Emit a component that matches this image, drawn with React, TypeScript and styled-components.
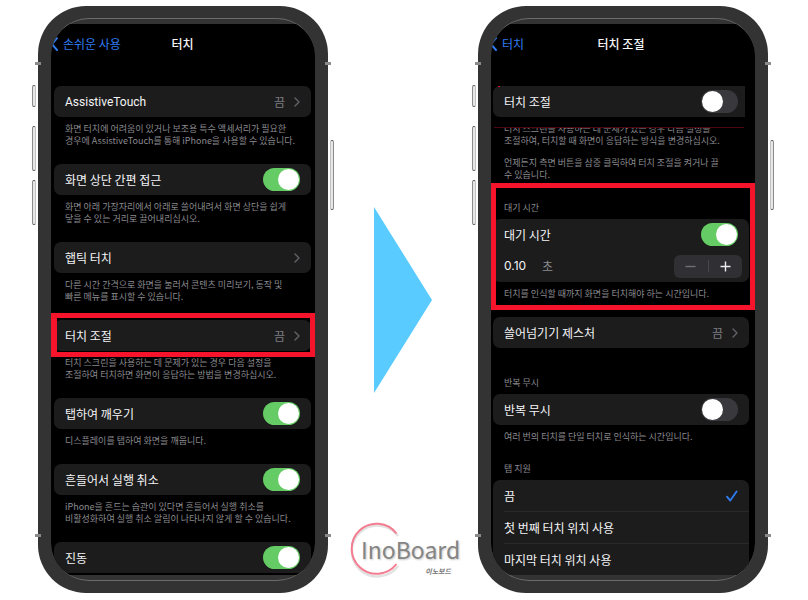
import React, { useState } from 'react';
import styled, { createGlobalStyle, css } from 'styled-components';

const GlobalStyle = createGlobalStyle`
  * { box-sizing: border-box; }
  body {
    margin: 0;
    background: #ffffff;
    font-family: "Noto Sans CJK KR", "Noto Sans", sans-serif;
    -webkit-font-smoothing: antialiased;
  }
  button, input { font: inherit; color: inherit; }
`;

const Page = styled.main`
  display: grid;
  grid-template-columns: 290fr 150fr 290fr;
  min-height: 100vh;
  padding: 6px 40px 7px 38px;
`;

/* ---------- phone body ---------- */

const Frame = styled.section`
  position: relative;
  display: flex;
  padding: 12px 13px;
  border-radius: 48px;
  background: #333333;
`;

const SideKey = styled.span<{ $side: 'left' | 'right'; $top: number; $length: number }>`
  position: absolute;
  ${(p) => p.$side}: -6px;
  top: ${(p) => p.$top}px;
  width: 4px;
  height: ${(p) => p.$length}px;
  border: 1px solid #8c8c8c;
  border-${(p) => (p.$side === 'left' ? 'right' : 'left')}-color: #c4c4c4;
  border-top-color: #555555;
  border-bottom-color: #555555;
  border-radius: 2px;
  background: #e6e6e6;
`;

const Antenna = styled.span<{ $side: 'left' | 'right'; $edge: 'top' | 'bottom' }>`
  position: absolute;
  ${(p) => p.$side}: -3px;
  ${(p) => p.$edge}: 56px;
  width: 6px;
  height: 3px;
  background: #8a8a8a;
`;

const Glass = styled.div`
  display: flex;
  flex: 1;
  min-width: 0;
  padding: 5px 0;
  border: solid #6c6c6c;
  border-width: 1px 0;
  border-radius: 38px;
  overflow: hidden;
`;

const Screen = styled.div<{ $end: number; $start: number }>`
  flex: 1;
  min-width: 0;
  padding: 0 ${(p) => p.$end}px 0 ${(p) => p.$start}px;
  background: #000000;
  color: #f4f4f6;
`;

/* ---------- navigation bar ---------- */

const NavBar = styled.header`
  display: grid;
  grid-template-columns: 1fr auto 1fr;
  height: 62px;
  padding-top: 10px;
  margin: 0 -3px;
  font-size: 12px;
  line-height: 20px;
`;

const Back = styled.a`
  display: flex;
  align-items: center;
  align-self: start;
  gap: 5px;
  color: #2f7cf0;
  text-decoration: none;
  white-space: nowrap;
`;

const Title = styled.h1`
  margin: 0;
  font-size: 12px;
  font-weight: 500;
  line-height: 20px;
`;

/* ---------- list parts ---------- */

const Group = styled.section<{ $before?: number }>`
  position: relative;
  margin-top: ${(p) => p.$before ?? 17}px;
`;

const Card = styled.div<{ $cut?: boolean }>`
  position: relative;
  border-radius: 7px;
  background: #1c1c1d;
  ${(p) =>
    p.$cut &&
    css`
      margin-right: 4px;
      border-radius: 7px 0 0 7px;
      &::before {
        content: '';
        position: absolute;
        top: 0;
        left: 5px;
        width: 2px;
        height: 1px;
        background: #e01025;
      }
    `}
`;

const rowStyle = css`
  display: flex;
  align-items: center;
  width: 100%;
  height: 31px;
  padding: 0 11px;
  border: 0;
  background: none;
  font-size: 12px;
  line-height: 20px;
  text-align: left;
  white-space: nowrap;
`;

const LabelRow = styled.label<{ $tight?: boolean }>`
  ${rowStyle}
  ${(p) => p.$tight && css`padding-right: 7px;`}
`;

const ButtonRow = styled.button`
  ${rowStyle}
  cursor: pointer;
`;

const PlainRow = styled.div`
  ${rowStyle}
  height: 32px;
  padding-right: 7px;
`;

const Divider = styled.hr`
  height: 1px;
  margin: 0 0 0 11px;
  border: 0;
  background: #29292b;
`;

const RowText = styled.span<{ $latin?: boolean }>`
  flex: 1;
  ${(p) => p.$latin && css`font-family: Roboto, sans-serif;`}
`;

const RowValue = styled.span`
  margin-right: 9px;
  color: #7d7d82;
`;

const Caption = styled.p<{ $before?: number; $strip?: boolean }>`
  position: relative;
  margin: ${(p) => p.$before ?? 6}px 0 0;
  padding-left: 11px;
  color: #8a8a8f;
  font-size: 9px;
  line-height: 12px;
  white-space: nowrap;
  ${(p) =>
    p.$strip &&
    css`
      &::before {
        content: '';
        position: absolute;
        top: 0;
        left: 1px;
        right: 5px;
        height: 4px;
        border-bottom: 1px solid #4d0710;
        background: #000000;
      }
    `}
`;

const GroupTitle = styled.h2`
  margin: 0 0 5px;
  padding-left: 11px;
  color: #8a8a8f;
  font-size: 9px;
  font-weight: 400;
  line-height: 12px;
`;

const Switch = styled.input`
  appearance: none;
  flex: none;
  display: flex;
  align-items: center;
  width: 37px;
  height: 23px;
  margin: 0;
  padding: 1px;
  border-radius: 12px;
  background: #39393d;
  cursor: pointer;
  &::before {
    content: '';
    width: 21px;
    height: 21px;
    border-radius: 50%;
    background: #ffffff;
  }
  &:checked {
    justify-content: flex-end;
    background: #65cb64;
  }
`;

const RowMark = styled.span`
  position: absolute;
  inset: -7px -4px -6px -3px;
  border: 5px solid #f5142c;
  border-left-width: 6px;
  pointer-events: none;
`;

const MarkedGroup = styled(Group)`
  padding: 19px 0 10px;
  &::after {
    content: '';
    position: absolute;
    inset: 0 -6px 0 -2px;
    border: 5px solid #f5142c;
    pointer-events: none;
  }
`;

const Seconds = styled.input`
  width: 38px;
  padding: 0;
  border: 0;
  outline: 0;
  background: none;
  font-family: Inter, sans-serif;
  font-size: 12px;
`;

const Unit = styled.label`
  flex: 1;
  color: #8a8a8f;
`;

const Stepper = styled.div`
  display: flex;
  align-items: center;
  width: 68px;
  height: 23px;
  border-radius: 6px;
  background: #303034;
`;

const StepButton = styled.button`
  display: flex;
  flex: 1;
  align-items: center;
  justify-content: center;
  height: 100%;
  padding: 0;
  border: 0;
  background: none;
  color: #ececee;
  cursor: pointer;
  &:disabled { color: #707075; }
`;

const StepLine = styled.span`
  width: 1px;
  height: 12px;
  background: #48484c;
`;

const Radio = styled.input`
  appearance: none;
  width: 0;
  height: 0;
  margin: 0;
  & ~ svg { visibility: hidden; }
  &:checked ~ svg { visibility: visible; }
`;

/* ---------- middle column ---------- */

const Middle = styled.div`
  display: grid;
  grid-template-rows: 1fr auto 1fr;
  justify-items: center;
`;

const Logo = styled.div`
  position: relative;
  grid-row: 3;
  align-self: end;
  width: 108px;
  height: 56px;
  margin-bottom: 15px;
  padding: 10px 0 0 12px;
  white-space: nowrap;
`;

const LogoRing = styled.svg`
  position: absolute;
  top: 0;
  left: 0;
`;

const LogoName = styled.div`
  position: relative;
  color: #858585;
  font-size: 23px;
  line-height: 34px;
  text-shadow: 1px 1px 2px #c8c8c8;
`;

const LogoSub = styled.div`
  position: relative;
  padding-right: 6px;
  color: #777777;
  font-size: 7px;
  font-style: italic;
  font-weight: 700;
  line-height: 10px;
  text-align: right;
`;

const Arrow = styled.svg`
  grid-row: 2;
`;

/* ---------- small pieces ---------- */

const BackIcon = () => (
  <svg width="7" height="14" viewBox="0 0 7 14" fill="none" aria-hidden="true">
    <path d="M6 1.2 1 7.2l5 5.8" stroke="#2f7cf0" strokeWidth="2" strokeLinecap="round" strokeLinejoin="round" />
  </svg>
);

const Chevron = () => (
  <svg width="6" height="10" viewBox="0 0 6 10" fill="none" aria-hidden="true">
    <path d="M1 1l4 4-4 4" stroke="#626267" strokeWidth="1.4" strokeLinecap="round" strokeLinejoin="round" />
  </svg>
);

const Check = () => (
  <svg width="12" height="12" viewBox="0 0 12 12" fill="none" aria-hidden="true">
    <path d="M1 6.6 4.3 10.6 10.6 1.4" stroke="#2f7cf0" strokeWidth="1.8" strokeLinecap="round" strokeLinejoin="round" />
  </svg>
);

type PhoneProps = { start: number; end: number; children: React.ReactNode };

const Phone = ({ start, end, children }: PhoneProps) => (
  <Frame>
    <SideKey $side="left" $top={79} $length={22} />
    <SideKey $side="left" $top={120} $length={45} />
    <SideKey $side="left" $top={174} $length={45} />
    <SideKey $side="right" $top={134} $length={70} />
    <Antenna $side="left" $edge="top" />
    <Antenna $side="right" $edge="top" />
    <Antenna $side="left" $edge="bottom" />
    <Antenna $side="right" $edge="bottom" />
    <Glass>
      <Screen $start={start} $end={end}>{children}</Screen>
    </Glass>
  </Frame>
);

type ItemProps = {
  title: string;
  latin?: boolean;
  first?: boolean;
  on?: boolean;
  value?: string;
  marked?: boolean;
  lines?: string[];
};

const Item = ({ title, latin, first, on, value, marked, lines }: ItemProps) => (
  <Group $before={first ? 0 : 17}>
    <Card>
      {on ? (
        <LabelRow>
          <RowText>{title}</RowText>
          <Switch type="checkbox" defaultChecked />
        </LabelRow>
      ) : (
        <ButtonRow type="button">
          <RowText $latin={latin}>{title}</RowText>
          {value && <RowValue>{value}</RowValue>}
          <Chevron />
        </ButtonRow>
      )}
      {marked && <RowMark />}
    </Card>
    {lines && <CaptionLines lines={lines} />}
  </Group>
);

type CaptionProps = { lines: string[]; before?: number; strip?: boolean };

const CaptionLines = ({ lines, before, strip }: CaptionProps) => (
  <Caption $before={before} $strip={strip}>
    {lines.map((line, i) => (
      <React.Fragment key={line}>
        {i > 0 && <br />}
        {line}
      </React.Fragment>
    ))}
  </Caption>
);

const touchItems: ItemProps[] = [
  {
    title: 'AssistiveTouch',
    latin: true,
    value: '끔',
    lines: [
      '화면 터치에 어려움이 있거나 보조용 특수 액세서리가 필요한',
      '경우에 AssistiveTouch를 통해 iPhone을 사용할 수 있습니다.',
    ],
  },
  {
    title: '화면 상단 간편 접근',
    on: true,
    lines: [
      '화면 아래 가장자리에서 아래로 쓸어내려서 화면 상단을 쉽게',
      '닿을 수 있는 거리로 끌어내리십시오.',
    ],
  },
  {
    title: '햅틱 터치',
    lines: [
      '다른 시간 간격으로 화면을 눌러서 콘텐츠 미리보기, 동작 및',
      '빠른 메뉴를 표시할 수 있습니다.',
    ],
  },
  {
    title: '터치 조절',
    value: '끔',
    marked: true,
    lines: [
      '터치 스크린을 사용하는 데 문제가 있는 경우 다음 설정을',
      '조절하여 터치하면 화면이 응답하는 방법을 변경하십시오.',
    ],
  },
  { title: '탭하여 깨우기', on: true, lines: ['디스플레이를 탭하여 화면을 깨웁니다.'] },
  {
    title: '흔들어서 실행 취소',
    on: true,
    lines: [
      'iPhone을 흔드는 습관이 있다면 흔들어서 실행 취소를',
      '비활성화하여 실행 취소 알림이 나타나지 않게 할 수 있습니다.',
    ],
  },
  { title: '진동', on: true },
];

const tapOptions = ['끔', '첫 번째 터치 위치 사용', '마지막 터치 위치 사용'];

export default function App() {
  const [tenths, setTenths] = useState(1);

  return (
    <>
      <GlobalStyle />
      <Page>
        <Phone start={3} end={4}>
          <NavBar>
            <Back href="#accessibility">
              <BackIcon />
              손쉬운 사용
            </Back>
            <Title>터치</Title>
          </NavBar>
          {touchItems.map((item, i) => (
            <Item key={item.title} {...item} first={i === 0} />
          ))}
        </Phone>

        <Middle>
          <Arrow width="58" height="186" viewBox="0 0 58 186" aria-hidden="true">
            <path d="M0 0 58 93 0 186Z" fill="#5acbff" />
          </Arrow>
          <Logo>
            <LogoRing width="60" height="58" viewBox="0 0 60 58" fill="none" aria-hidden="true">
              <path d="M49 14A25.5 25.5 0 1 0 49 44" stroke="#e2e2e2" strokeWidth="2.5" />
              <path d="M47.5 11.5A25 25 0 1 0 47.5 42" stroke="#f47c90" strokeWidth="2" />
            </LogoRing>
            <LogoName>InoBoard</LogoName>
            <LogoSub>이노보드</LogoSub>
          </Logo>
        </Middle>

        <Phone start={2} end={6}>
          <NavBar>
            <Back href="#touch">
              <BackIcon />
              터치
            </Back>
            <Title>터치 조절</Title>
          </NavBar>

          <Group $before={0}>
            <Card $cut>
              <LabelRow $tight>
                <RowText>터치 조절</RowText>
                <Switch type="checkbox" />
              </LabelRow>
            </Card>
            <CaptionLines
              strip
              lines={[
                '터치 스크린을 사용하는 데 문제가 있는 경우 다음 설정을',
                '조절하여, 터치할 때 화면이 응답하는 방식을 변경하십시오.',
              ]}
            />
            <CaptionLines
              before={10}
              lines={['언제든지 측면 버튼을 삼중 클릭하여 터치 조절을 켜거나 끌', '수 있습니다.']}
            />
          </Group>

          <MarkedGroup $before={2}>
            <GroupTitle>대기 시간</GroupTitle>
            <Card>
              <LabelRow>
                <RowText>대기 시간</RowText>
                <Switch type="checkbox" defaultChecked />
              </LabelRow>
              <PlainRow>
                <Seconds id="hold" readOnly value={(tenths / 10).toFixed(2)} />
                <Unit htmlFor="hold">초</Unit>
                <Stepper>
                  <StepButton
                    type="button"
                    aria-label="감소"
                    disabled={tenths <= 1}
                    onClick={() => setTenths(tenths - 1)}
                  >
                    <svg width="11" height="11" viewBox="0 0 11 11" aria-hidden="true">
                      <path d="M0.5 5.5h10" stroke="currentColor" strokeWidth="1.4" />
                    </svg>
                  </StepButton>
                  <StepLine />
                  <StepButton type="button" aria-label="증가" onClick={() => setTenths(tenths + 1)}>
                    <svg width="11" height="11" viewBox="0 0 11 11" aria-hidden="true">
                      <path d="M0.5 5.5h10M5.5 0.5v10" stroke="currentColor" strokeWidth="1.4" />
                    </svg>
                  </StepButton>
                </Stepper>
              </PlainRow>
            </Card>
            <CaptionLines lines={['터치를 인식할 때까지 화면을 터치해야 하는 시간입니다.']} />
          </MarkedGroup>

          <Group $before={7}>
            <Card>
              <ButtonRow type="button">
                <RowText>쓸어넘기기 제스처</RowText>
                <RowValue>끔</RowValue>
                <Chevron />
              </ButtonRow>
            </Card>
          </Group>

          <Group $before={29}>
            <GroupTitle>반복 무시</GroupTitle>
            <Card>
              <LabelRow>
                <RowText>반복 무시</RowText>
                <Switch type="checkbox" />
              </LabelRow>
            </Card>
            <CaptionLines lines={['여러 번의 터치를 단일 터치로 인식하는 시간입니다.']} />
          </Group>

          <Group $before={20}>
            <GroupTitle>탭 지원</GroupTitle>
            <Card>
              {tapOptions.map((option, i) => (
                <React.Fragment key={option}>
                  {i > 0 && <Divider />}
                  <LabelRow>
                    <Radio type="radio" name="tap" defaultChecked={i === 0} />
                    <RowText>{option}</RowText>
                    <Check />
                  </LabelRow>
                </React.Fragment>
              ))}
            </Card>
          </Group>
        </Phone>
      </Page>
    </>
  );
}
